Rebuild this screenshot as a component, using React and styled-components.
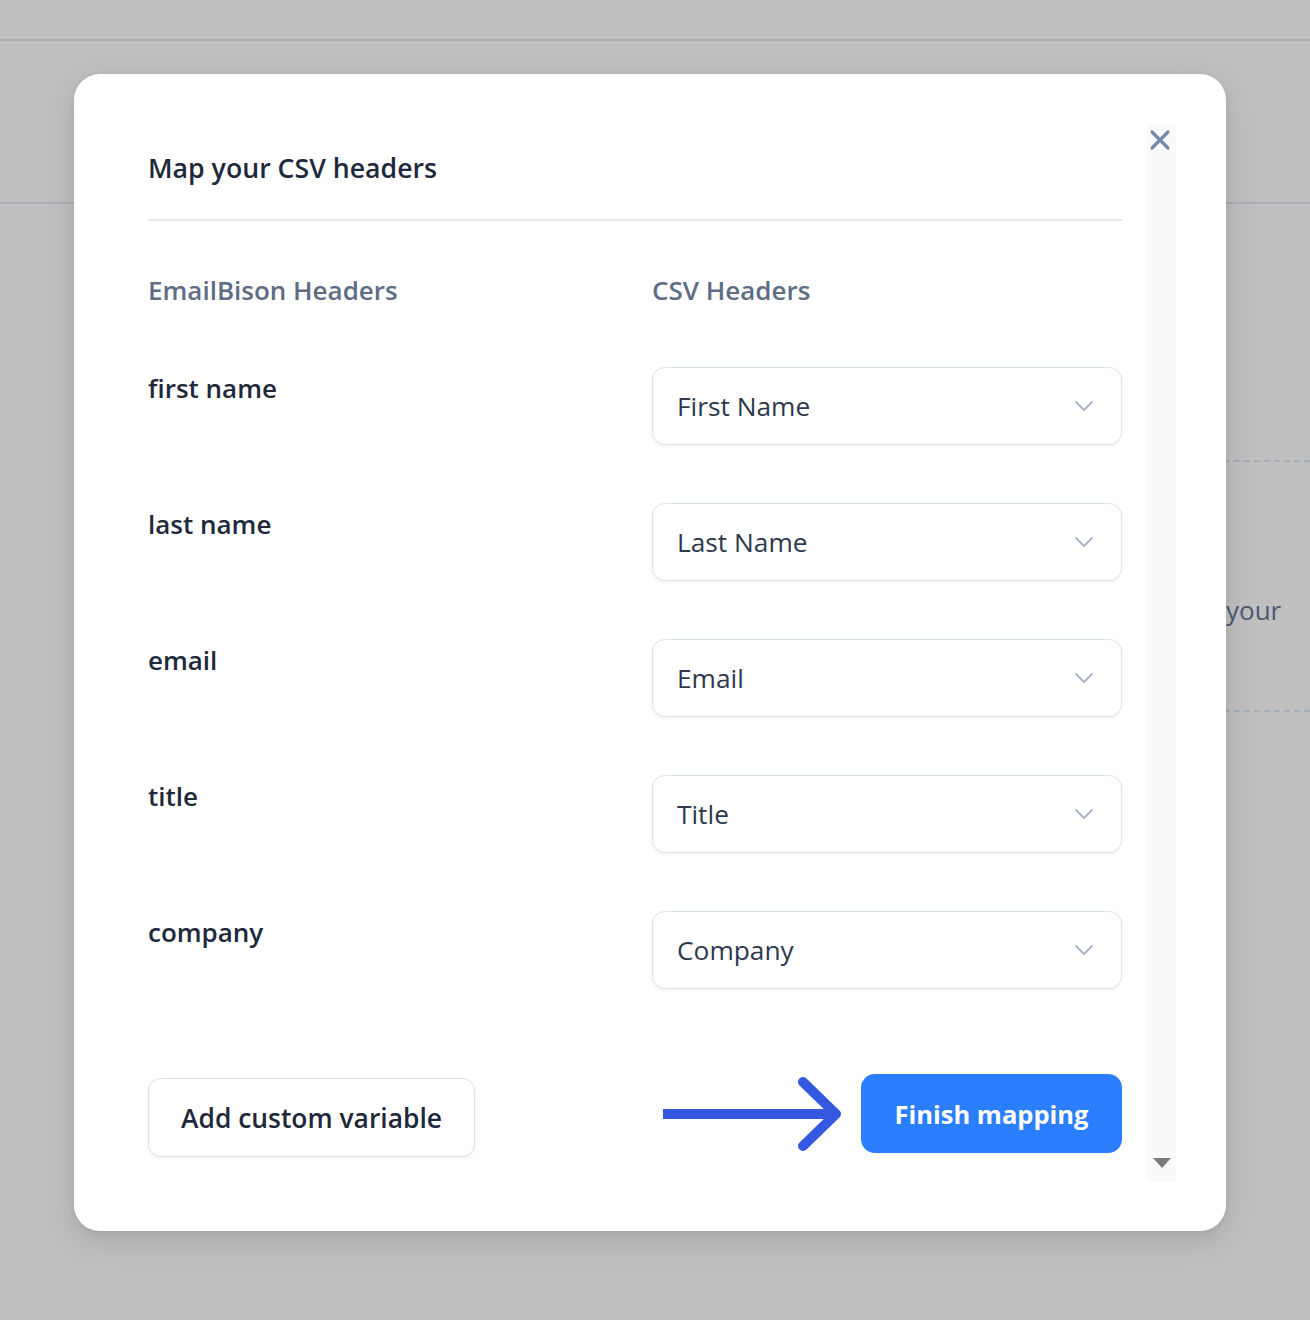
import React from "react";
import styled, { createGlobalStyle } from "styled-components";

const Global = createGlobalStyle`
  html, body { margin: 0; padding: 0; }
  body {
    background: #bfbfbf;
    font-family: "Open Sans", "Noto Sans", "Liberation Sans", sans-serif;
    width: 1310px;
    height: 1320px;
    overflow: hidden;
  }
  * { box-sizing: border-box; }
`;

const Page = styled.div`
  position: relative;
  width: 1310px;
  height: 1320px;
  background: #bfbfbf;
`;

const TopBar = styled.div`
  height: 41px;
  border-bottom: 2px solid #a9aeb6;
`;

const PageHeader = styled.div`
  height: 163px;
  border-bottom: 2px solid #a9aeb6;
`;

const PageBody = styled.div`
  padding: 256px 0 0 400px;
`;

const Dropzone = styled.div`
  height: 252px;
  border-top: 2px dashed #a3acb9;
  border-bottom: 2px dashed #a3acb9;
  display: flex;
  align-items: center;
  padding-top: 48px;
`;

const DropText = styled.span`
  margin-left: 826px;
  font-size: 26px;
  color: #4b5a73;
  white-space: nowrap;
`;

const Modal = styled.div`
  position: absolute;
  left: 74px;
  top: 74px;
  width: 1152px;
  height: 1157px;
  background: #ffffff;
  border-radius: 26px;
  box-shadow: 0 10px 30px rgba(0, 0, 0, 0.12), 0 2px 6px rgba(0, 0, 0, 0.06);
  padding: 50px 50px 49px 74px;
  display: flex;
`;

const Content = styled.div`
  flex: 1;
  padding: 26px 25px 0 0;
  display: flex;
  flex-direction: column;
`;

const Scrollbar = styled.div`
  width: 29px;
  background: #fafafa;
  display: flex;
  flex-direction: column;
  justify-content: flex-end;
  align-items: center;
  padding-bottom: 14px;
`;

const DownTriangle = styled.div`
  width: 0;
  height: 0;
  border-left: 9px solid transparent;
  border-right: 9px solid transparent;
  border-top: 10px solid #7b7b7b;
`;

const CloseButton = styled.button`
  position: absolute;
  top: 54px;
  left: 1074px;
  width: 24px;
  height: 24px;
  padding: 0;
  border: 0;
  background: transparent;
  display: flex;
  align-items: center;
  justify-content: center;
  cursor: pointer;
`;

const Title = styled.h2`
  margin: 0;
  font-size: 26.7px;
  line-height: 36px;
  font-weight: 600;
  color: #1e293b;
`;

const Divider = styled.hr`
  margin: 33px 0 0 0;
  border: 0;
  height: 2px;
  background: #e5e8ee;
`;

const Grid = styled.div`
  display: grid;
  grid-template-columns: 1fr 470px;
  column-gap: 34px;
`;

const HeaderGrid = styled(Grid)`
  margin-top: 51px;
`;

const ColumnHeader = styled.div`
  font-size: 26px;
  line-height: 36px;
  font-weight: 600;
  color: #5d6d86;
`;

const Rows = styled(Grid)`
  margin-top: 59px;
  row-gap: 58px;
`;

const FieldLabel = styled.div`
  padding-top: 3px;
  font-size: 26px;
  line-height: 36px;
  font-weight: 600;
  color: #1e293b;
`;

const SelectBox = styled.div`
  height: 78px;
  border: 1.5px solid #dde3ec;
  border-radius: 13px;
  background: #fff;
  box-shadow: 0 1px 3px rgba(15, 23, 42, 0.08);
  display: flex;
  align-items: center;
  justify-content: space-between;
  padding: 0 27px 0 24px;
  font-size: 26.3px;
  color: #2d394d;
`;

const Footer = styled.div`
  margin-top: 85px;
  display: flex;
  align-items: flex-start;
  justify-content: space-between;
`;

const SecondaryButton = styled.button`
  margin-top: 4px;
  height: 79px;
  width: 327px;
  border: 1.5px solid #dbe2ea;
  border-radius: 13px;
  background: #fff;
  box-shadow: 0 1px 3px rgba(15, 23, 42, 0.08);
  font-family: inherit;
  font-size: 26.4px;
  font-weight: 600;
  color: #1e293b;
  cursor: pointer;
`;

const RightActions = styled.div`
  display: flex;
  align-items: center;
  gap: 18px;
`;

const PrimaryButton = styled.button`
  height: 79px;
  width: 261px;
  border: 0;
  border-radius: 14px;
  background: #2b7fff;
  font-family: inherit;
  font-size: 25.5px;
  font-weight: 700;
  color: #fff;
  cursor: pointer;
`;

const Chevron = () => (
  <svg width="20" height="12" viewBox="0 0 20 12" fill="none">
    <path d="M2 2l8 8 8-8" stroke="#aab6c9" strokeWidth="2" strokeLinecap="round" strokeLinejoin="round" />
  </svg>
);

const CloseIcon = () => (
  <svg width="22" height="22" viewBox="0 0 22 22" fill="none">
    <path d="M3 3l16 16M19 3L3 19" stroke="#7489aa" strokeWidth="3.2" strokeLinecap="round" />
  </svg>
);

const Arrow = () => (
  <svg width="180" height="76" viewBox="0 0 180 76" fill="none">
    <path d="M0 38H172" stroke="#3558e0" strokeWidth="10" />
    <path d="M140 6l33 32-33 32" stroke="#3558e0" strokeWidth="10" strokeLinecap="round" strokeLinejoin="round" />
  </svg>
);

const rows = [
  ["first name", "First Name"],
  ["last name", "Last Name"],
  ["email", "Email"],
  ["title", "Title"],
  ["company", "Company"],
];

export default function App() {
  return (
    <Page>
      <Global />
      <TopBar />
      <PageHeader />
      <PageBody>
        <Dropzone>
          <DropText>your</DropText>
        </Dropzone>
      </PageBody>
      <Modal>
        <Content>
          <Title>Map your CSV headers</Title>
          <Divider />
          <HeaderGrid>
            <ColumnHeader>EmailBison Headers</ColumnHeader>
            <ColumnHeader>CSV Headers</ColumnHeader>
          </HeaderGrid>
          <Rows>
            {rows.map(([label, value]) => (
              <React.Fragment key={label}>
                <FieldLabel>{label}</FieldLabel>
                <SelectBox>
                  <span>{value}</span>
                  <Chevron />
                </SelectBox>
              </React.Fragment>
            ))}
          </Rows>
          <Footer>
            <SecondaryButton>Add custom variable</SecondaryButton>
            <RightActions>
              <Arrow />
              <PrimaryButton>Finish mapping</PrimaryButton>
            </RightActions>
          </Footer>
        </Content>
        <Scrollbar>
          <DownTriangle />
        </Scrollbar>
        <CloseButton aria-label="Close">
          <CloseIcon />
        </CloseButton>
      </Modal>
    </Page>
  );
}
